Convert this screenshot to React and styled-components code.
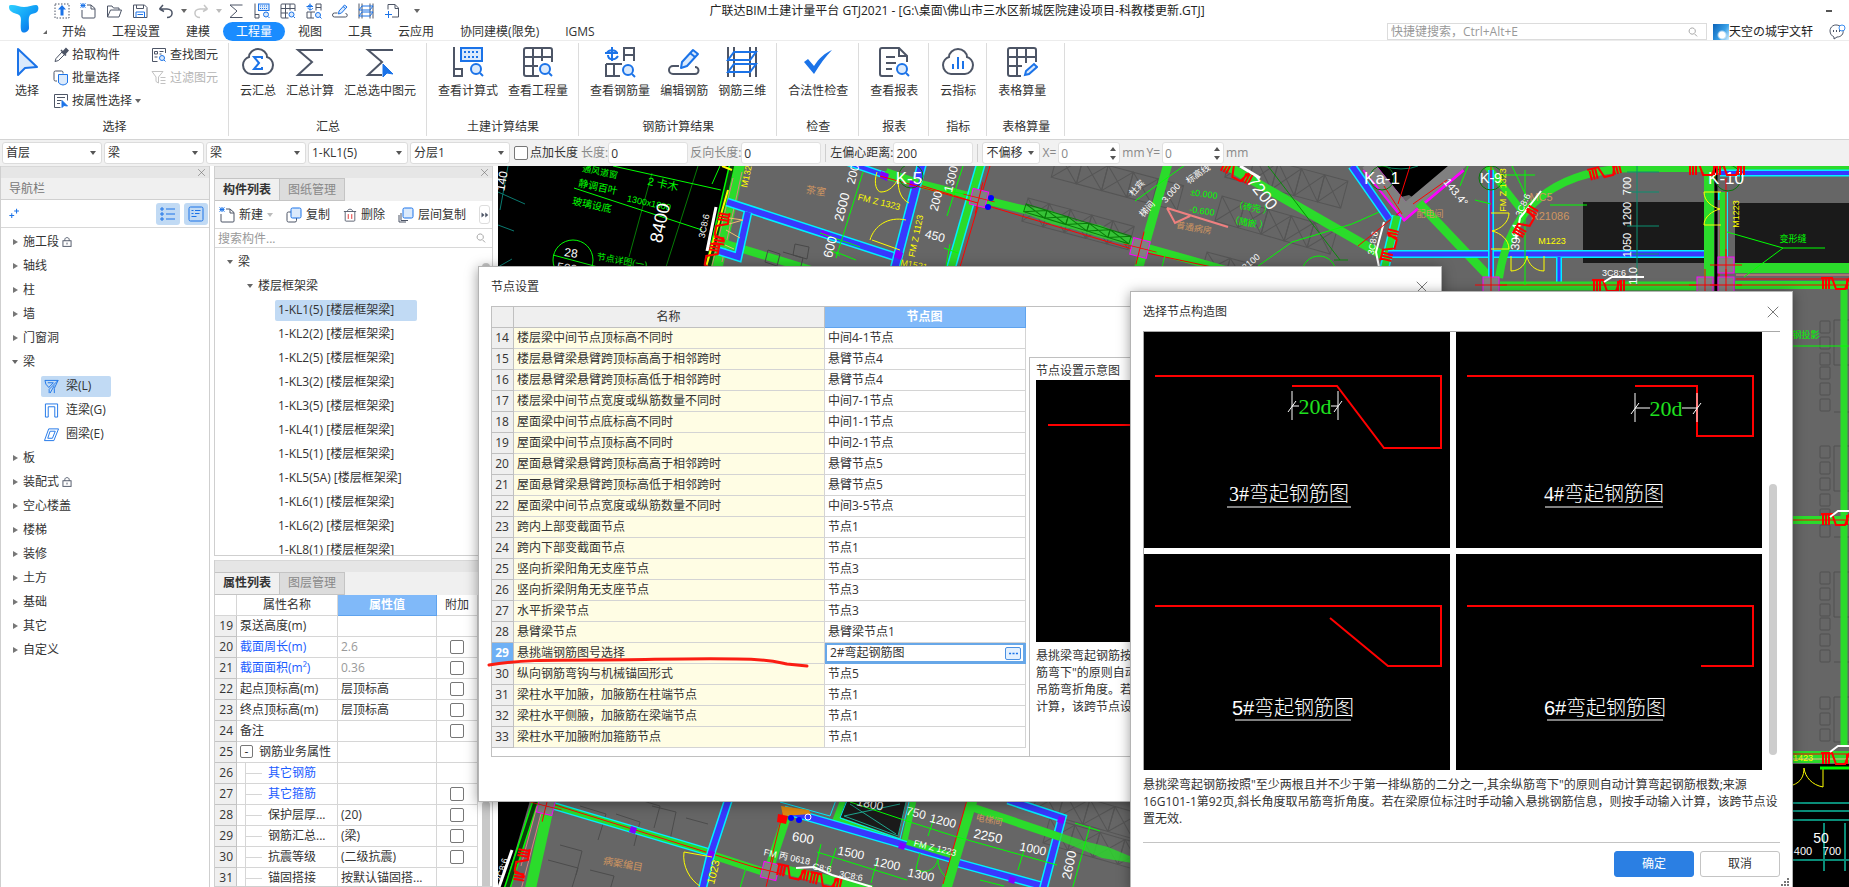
import React from "react";
import styled, { createGlobalStyle, css } from "styled-components";

const INK = "#4d5566";
const BLUE = "#1b73e8";
const PALE = "#dbeafc";

const GlobalStyle = createGlobalStyle`
  * { box-sizing: border-box; }
  body { margin: 0; background: #fff; }
  body, button, input, select, textarea, table {
    font-family: "Open Sans", "Noto Sans CJK SC", sans-serif;
    font-size: 12px;
    line-height: 18px;
    color: #333;
  }
  button { border: 0; background: none; padding: 0; margin: 0; white-space: nowrap; }
  svg { display: block; flex: none; }
`;

/* ---------- icons ---------- */

const Lens = ({ x, y, r = 5 }) => (
  <g stroke={BLUE} strokeWidth="2">
    <circle cx={x} cy={y} r={r} fill={PALE} />
    <path d={`M${x + r - 1} ${y + r - 1}l3 3`} />
  </g>
);
const Pencil = () => (
  <g stroke={BLUE} strokeWidth="2" fill={PALE} strokeLinejoin="round">
    <path d="M13 22l1-6L25 4l5 4-11 12z" />
    <path d="M22 7l5 4" />
  </g>
);

const shapes = {
  cursor: (
    <path d="M7 3v26l7-7 12-1z" fill={PALE} stroke={BLUE} strokeWidth="2" strokeLinejoin="round" />
  ),
  cloudSum: (
    <g strokeWidth="2">
      <path d="M16 3c5 0 9 4 9 8 3 1 6 4 6 8 0 5-4 9-8 9H9c-4 0-8-4-8-9 0-4 3-7 6-8 0-4 4-8 9-8z" />
      <path d="M20 13v-2h-8l5 6-5 6h8v-2" stroke={BLUE} />
    </g>
  ),
  sigma: <path d="M29 4H4l14 12L4 29h25" strokeWidth="2" />,
  sigmaCursor: (
    <g strokeWidth="2">
      <path d="M29 4H4l14 12L4 29h14" />
      <path d="M19 18v13l4-4 6 1z" fill={BLUE} stroke={BLUE} strokeWidth="1" />
    </g>
  ),
  formula: (
    <g strokeWidth="2">
      <path d="M2 1v29h8v-7H2" />
      <rect x="9" y="2" width="21" height="13" stroke={BLUE} fill={PALE} />
      <path d="M12 6h15M12 11h15" stroke={BLUE} strokeDasharray="2 2" />
      <Lens x={24} y={23} />
    </g>
  ),
  quantity: (
    <g strokeWidth="2">
      <path d="M17 30H4a2 2 0 0 1-2-2V4a2 2 0 0 1 2-2h24a2 2 0 0 1 2 2v12M2 11h28M2 20h14M11 2v28M20 2v13" />
      <Lens x={23} y={23} />
    </g>
  ),
  rebarQty: (
    <g strokeWidth="2">
      <path d="M20 15V2h10v13M20 9h10M2 18v12h14M2 18h16M10 18v12" />
      <path d="M8 1v14M3 8c0-5 10-5 10 0M1 7h13M4 9c0 5 7 6 10 1" stroke={BLUE} />
      <Lens x={24} y={24} />
    </g>
  ),
  editRebar: (
    <g strokeWidth="2">
      <path d="M11 20H5a4 4 0 0 0 0 8h22a3 3 0 0 0 0-7" />
      <Pencil />
    </g>
  ),
  rebar3d: (
    <g strokeWidth="2">
      <path d="M2 1v30M8 1v30M24 1v30M30 1v30" />
      <path d="M8 6h22l-6 8H2zM8 18h22l-6 8H2z" stroke={BLUE} />
    </g>
  ),
  check: <path d="M2 16l4-3 6 7C17 12 23 7 30 4 24 10 18 18 12 28z" fill={BLUE} stroke="none" />,
  report: (
    <g strokeWidth="2">
      <path d="M15 30H4a2 2 0 0 1-2-2V4a2 2 0 0 1 2-2h17l8 8v6M21 2v8h8M8 11h9M8 17h10M8 23h6" />
      <Lens x={24} y={23} />
    </g>
  ),
  cloudChart: (
    <g strokeWidth="2">
      <path d="M16 3c5 0 9 4 9 8 3 1 6 4 6 8 0 5-4 9-8 9H9c-4 0-8-4-8-9 0-4 3-7 6-8 0-4 4-8 9-8z" />
      <path d="M11 18v5M16 11v12M21 15v8" stroke={BLUE} />
    </g>
  ),
  tableCalc: (
    <g strokeWidth="2">
      <path d="M15 30H4a2 2 0 0 1-2-2V4a2 2 0 0 1 2-2h24a2 2 0 0 1 2 2v12M2 11h28M2 20h14M11 2v28M20 2v15" />
      <path d="M19 29l1-4 8-7 3 3-8 7z" stroke={BLUE} fill={PALE} />
    </g>
  ),
  upload: (
    <g strokeWidth="2">
      <rect x="2" y="2" width="28" height="28" strokeDasharray="3 3" />
      <path d="M16 4l8 9h-5v12h-6V13H8z" fill={BLUE} stroke="none" />
    </g>
  ),
  newFile: (
    <g strokeWidth="2">
      <path d="M4 14v14a2 2 0 0 0 2 2h22a2 2 0 0 0 2-2V11l-8-7h-8M22 4v8h8" />
      <path d="M1 1l10 8M11 1L1 9M1 5h10M6 0v10" stroke={BLUE} />
    </g>
  ),
  open: <path d="M3 28V6h9l3 4h11v4M3 28l6-14h22l-5 14z" strokeWidth="2" />,
  save: (
    <g strokeWidth="2">
      <path d="M3 4h22l5 5v20H3z" />
      <path d="M9 4v7h14V4" />
      <path d="M8 29V18h17v11M11 23h11" stroke={BLUE} />
    </g>
  ),
  undo: <path d="M3 12l7-8M3 12l9 5M3 12h15c14 0 13 17 0 17" strokeWidth="3" />,
  redo: <path d="M29 12l-7-8M29 12l-9 5M29 12H14c-14 0-13 17 0 17" strokeWidth="3" stroke="#c6c6c6" />,
  crop: (
    <g strokeWidth="2">
      <path d="M8 3h14l7 7v18H16M22 3v8h7M8 3v10" />
      <path d="M9 16v14M2 23h14" stroke={BLUE} />
    </g>
  ),
  dropper: (
    <g strokeWidth="2">
      <path d="M4 29l2-6L18 10l5 5-12 12z" />
      <path d="M16 6l10 11M19 11l7-8 4 4-7 8z" fill={INK} strokeWidth="3" />
    </g>
  ),
  batch: (
    <g strokeWidth="2">
      <path d="M8 22H5a3 3 0 0 1-3-3V5a3 3 0 0 1 3-3h12a3 3 0 0 1 3 3v2" />
      <path d="M11 9h18v15c0 3-4 5-9 6-5-1-9-3-9-6z" stroke={BLUE} fill={PALE} />
    </g>
  ),
  byProp: (
    <g strokeWidth="2">
      <path d="M15 29H3V3h26v12M8 9h16M8 15h9M8 21h6" />
      <path d="M18 15v14l4-4 7 1z" fill={BLUE} stroke={BLUE} />
    </g>
  ),
  find: (
    <g strokeWidth="2">
      <path d="M13 29H3V3h26v9M7 9h6v5H7zM17 9h8M17 14h4M7 20h6" />
      <Lens x={22} y={22} />
    </g>
  ),
  filter: (
    <path
      d="M2 3h22l-9 11v12l-5-3v-9zM19 15h10M19 21h10M19 27h10"
      strokeWidth="2"
      stroke="#c2c2c2"
    />
  ),
  copy: (
    <g strokeWidth="2">
      <path d="M10 10H5a3 3 0 0 0-3 3v14a3 3 0 0 0 3 3h13a3 3 0 0 0 3-3v-5" />
      <rect x="10" y="2" width="20" height="20" rx="3" stroke={BLUE} fill={PALE} />
    </g>
  ),
  trash: (
    <g strokeWidth="2">
      <path d="M2 8h28M5 8v20a2 2 0 0 0 2 2h18a2 2 0 0 0 2-2V8M10 8c0-7 12-7 12 0" />
      <path d="M12 14v11M20 14v11" stroke="#e02020" />
    </g>
  ),
  layers: (
    <g strokeWidth="2">
      <path d="M6 12v15h14M2 16v14h14" />
      <rect x="10" y="2" width="20" height="20" rx="3" stroke={BLUE} fill={PALE} />
    </g>
  ),
  list: (
    <g strokeWidth="2" stroke={BLUE}>
      <path d="M12 6h18M12 16h18M12 26h18" />
      <path d="M2 4h4v4H2zM2 14h4v4H2zM2 24h4v4H2z" />
    </g>
  ),
  card: (
    <g strokeWidth="2" stroke={BLUE}>
      <rect x="2" y="2" width="28" height="28" rx="3" />
      <path d="M7 9h4M14 9h11M7 15h4M14 15h9M7 21h10" />
    </g>
  ),
  plus: <path d="M22 2v14M15 9h14M8 15v14M1 22h14" strokeWidth="3" stroke={BLUE} />,
  lock: (
    <g strokeWidth="3">
      <rect x="3" y="12" width="26" height="18" />
      <path d="M9 12V8c0-8 14-8 14 0v4M16 18v6" />
    </g>
  ),
  beam: <path d="M2 3h28L11 22v8M2 3l2 8 7 8M30 3L22 20v10M8 8h12l-9 9M22 14l-9 16" strokeWidth="2" stroke={BLUE} />,
  linkBeam: <path d="M3 30V2h26v28h-6V8H9v22z" strokeWidth="2" stroke={BLUE} />,
  ringBeam: <path d="M10 4h21L21 29H1zM13 9h11l-6 15H8z" strokeWidth="2" stroke={BLUE} />,
  search: <path d="M13 3a10 10 0 1 0 1 0zM21 22l8 8" strokeWidth="3" stroke="#a0a0a0" />,
  close: <path d="M4 4l24 24M28 4L4 28" strokeWidth="2" stroke="#666" />,
  more: <path d="M2 6l12 10L2 26zM17 6l12 10-12 10z" fill={INK} stroke="none" />,
  dots: <path d="M3 16h6M13 16h6M23 16h6" strokeWidth="5" stroke={BLUE} />,
};

const Icon = ({ name, size = 16 }) => (
  <svg width={size} height={size} viewBox="0 0 32 32" fill="none" stroke={INK} aria-hidden="true">
    {shapes[name]}
  </svg>
);

const Caret = styled.span`
  flex: none;
  width: 0;
  height: 0;
  border: 3px solid transparent;
  ${(p) =>
    p.$right
      ? css`border-left: 5px solid #777; border-right: 0;`
      : css`border-top: 4px solid ${p.$muted ? "#bbb" : "#666"}; border-bottom: 0;`}
`;

/* ---------- window header ---------- */

const Shell = styled.div`
  position: relative;
  display: flex;
  flex-direction: column;
  height: 100vh;
  overflow: hidden;
`;
const Header = styled.header`
  flex: none;
  display: grid;
  grid-template-columns: 49px 1fr;
  height: 41px;
  border-bottom: 1px solid #ececec;
`;
const LogoButton = styled.button`
  display: flex;
  align-items: flex-end;
  padding: 0 0 7px 9px;
`;
const HeaderRows = styled.div`
  display: grid;
  grid-template-rows: 22px 19px;
`;
const TitleRow = styled.div`
  display: grid;
  grid-template-columns: 1fr auto 1fr;
  align-items: center;
`;
const QuickBar = styled.div`
  display: flex;
  align-items: center;
`;
const QuickButton = styled.button`
  display: flex;
  justify-content: center;
  width: 26px;
`;
const CaretSlot = styled.button`
  display: flex;
  justify-content: center;
  width: ${(p) => (p.$wide ? 24 : 9)}px;
`;
const Title = styled.h1`
  margin: 0;
  padding-left: 16px;
  font-size: 12px;
  font-weight: 400;
  color: #222;
`;
const Minimize = styled.button`
  justify-self: end;
  width: 6px;
  height: 2px;
  margin-right: 17px;
  background: #555;
`;
const TabRow = styled.div`
  display: flex;
  align-items: center;
`;
const Menu = styled.nav`
  display: flex;
  flex: 1;
`;
const MenuTab = styled.button`
  height: 19px;
  padding: 0 13px;
  border-radius: 10px;
  line-height: 19px;
  color: ${(p) => (p.$on ? "#fff" : "#333")};
  background: ${(p) => (p.$on ? "#1a8cff" : "transparent")};
`;
const ShortcutSearch = styled.label`
  display: flex;
  align-items: center;
  width: 320px;
  height: 17px;
  padding-right: 8px;
  border: 1px solid #dcdcdc;
`;
const PlainInput = styled.input`
  flex: 1;
  min-width: 0;
  padding: 0 3px;
  border: 0;
  outline: 0;
  background: none;
  line-height: 15px;
  &::placeholder { color: #999; opacity: 1; }
`;
const User = styled.button`
  display: flex;
  align-items: center;
  margin-left: 6px;
  color: #222;
`;
const Avatar = styled.span`
  width: 16px;
  height: 16px;
  background: radial-gradient(circle at 9px 11px, #fff 0 3px, transparent 5px),
    linear-gradient(120deg, #0a62b8, #39a1e8 60%, #d8effc);
`;
const Message = styled.button`
  margin: 0 3px 0 16px;
`;

const Logo = () => (
  <svg width="40" height="29" viewBox="0 0 40 29" aria-hidden="true">
    <defs>
      <linearGradient id="logoFill" x1="0" y1="0" x2="1" y2="1">
        <stop offset="0" stopColor="#2fd0ff" />
        <stop offset="0.5" stopColor="#12a0f6" />
        <stop offset="1" stopColor="#0a62e6" />
      </linearGradient>
    </defs>
    <path
      d="M0 2c0-2 1-2 3-2 4 0 8 2 12 2S24 0 27 0c3 0 3 5 1 7-2 2-5 1-7 3-2 3-1 8-1 13 0 4-7 7-8 2-1-6 1-11-1-14C9 8 5 9 3 7 1 6 0 4 0 2z"
      fill="url(#logoFill)"
    />
    <path d="M34 29l4-4v4z" fill="#666" />
  </svg>
);

const quickIcons = ["upload", "newFile", "open", "save", "undo", "redo", "sigma", "formula", "quantity", "rebarQty", "editRebar", "rebar3d", "crop"];
const menuTabs = ["开始", "工程设置", "建模", "工程量", "视图", "工具", "云应用", "协同建模(限免)", "IGMS"];

const WindowHeader = () => (
  <Header>
    <LogoButton aria-label="应用菜单"><Logo /></LogoButton>
    <HeaderRows>
      <TitleRow>
        <QuickBar>
          {quickIcons.map((n) => (
            <React.Fragment key={n}>
              <QuickButton aria-label={n}><Icon name={n} /></QuickButton>
              {(n === "undo" || n === "redo") && (
                <CaretSlot aria-label={n + " history"}><Caret $muted={n === "redo"} /></CaretSlot>
              )}
            </React.Fragment>
          ))}
          <CaretSlot $wide aria-label="自定义"><Caret /></CaretSlot>
        </QuickBar>
        <Title>广联达BIM土建计量平台 GTJ2021 - [G:\桌面\佛山市三水区新城医院建设项目-科教楼更新.GTJ]</Title>
        <Minimize aria-label="最小化" />
      </TitleRow>
      <TabRow>
        <Menu>
          {menuTabs.map((t) => <MenuTab key={t} $on={t === "工程量"}>{t}</MenuTab>)}
        </Menu>
        <ShortcutSearch>
          <PlainInput placeholder="快捷键搜索，Ctrl+Alt+E" aria-label="快捷键搜索" />
          <Icon name="search" size={10} />
        </ShortcutSearch>
        <User><Avatar />天空の城宇文轩</User>
        <Message aria-label="消息">
          <svg width="17" height="16" viewBox="0 0 17 16" fill="none" stroke={INK}>
            <path d="M11 2C5-1 1 3 1 7c0 3 2 5 4 6v2l3-2c4 0 7-3 6-7" />
            <path d="M4 7h1M7 7h1M10 7h1" strokeWidth="2" />
            <circle cx="13" cy="4" r="3" stroke="#3d8ef0" />
          </svg>
        </Message>
      </TabRow>
    </HeaderRows>
  </Header>
);

/* ---------- ribbon ---------- */

const Ribbon = styled.div`
  flex: none;
  display: flex;
  height: 98px;
  padding: 2px 0 3px;
`;
const Group = styled.section`
  display: flex;
  flex-direction: column;
  justify-content: space-between;
  min-width: 78px;
  padding: 0 10px 0 11px;
  border-right: 1px solid #dcdcdc;
  &:nth-child(n + 6):not(:last-child) { min-width: 0; }
`;
const GroupTools = styled.div`
  display: flex;
  gap: 10px;
`;
const GroupName = styled.span`
  text-align: center;
`;
const BigButton = styled.button`
  display: flex;
  flex-direction: column;
  align-items: center;
  gap: 4px;
  padding-top: 3px;
`;
const SmallColumn = styled.div`
  display: grid;
  gap: 5px;
  align-content: start;
  padding-top: 3px;
`;
const SmallButton = styled.button`
  display: flex;
  align-items: center;
  gap: 3px;
  color: ${(p) => (p.$off ? "#b5b5b5" : "#333")};
`;

const ribbonGroups = [
  ["汇总", [["cloudSum", "云汇总"], ["sigma", "汇总计算"], ["sigmaCursor", "汇总选中图元"]]],
  ["土建计算结果", [["formula", "查看计算式"], ["quantity", "查看工程量"]]],
  ["钢筋计算结果", [["rebarQty", "查看钢筋量"], ["editRebar", "编辑钢筋"], ["rebar3d", "钢筋三维"]]],
  ["检查", [["check", "合法性检查"]]],
  ["报表", [["report", "查看报表"]]],
  ["指标", [["cloudChart", "云指标"]]],
  ["表格算量", [["tableCalc", "表格算量"]]],
];

const RibbonBar = () => (
  <Ribbon>
    <Group>
      <GroupTools>
        <BigButton><Icon name="cursor" size={32} />选择</BigButton>
        <SmallColumn>
          <SmallButton><Icon name="dropper" />拾取构件</SmallButton>
          <SmallButton><Icon name="batch" />批量选择</SmallButton>
          <SmallButton><Icon name="byProp" />按属性选择<Caret /></SmallButton>
        </SmallColumn>
        <SmallColumn>
          <SmallButton><Icon name="find" />查找图元</SmallButton>
          <SmallButton $off disabled><Icon name="filter" />过滤图元</SmallButton>
        </SmallColumn>
      </GroupTools>
      <GroupName>选择</GroupName>
    </Group>
    {ribbonGroups.map(([name, tools]) => (
      <Group key={name}>
        <GroupTools>
          {tools.map(([icon, label]) => (
            <BigButton key={label}><Icon name={icon} size={32} />{label}</BigButton>
          ))}
        </GroupTools>
        <GroupName>{name}</GroupName>
      </Group>
    ))}
  </Ribbon>
);

/* ---------- option bar ---------- */

const OptionBar = styled.div`
  flex: none;
  display: flex;
  align-items: center;
  gap: 2px;
  height: 27px;
  padding-left: 2px;
  border-top: 1px solid #d4d4d4;
  background: #f1f1f1;
  white-space: nowrap;
`;
const ComboFrame = styled.span`
  position: relative;
  display: flex;
  width: ${(p) => p.$w}px;
  height: 22px;
  &::after {
    content: "";
    position: absolute;
    right: 6px;
    top: 9px;
    border: 3px solid transparent;
    border-top: 4px solid #555;
    border-bottom: 0;
    pointer-events: none;
  }
`;
const ComboSelect = styled.select`
  appearance: none;
  width: 100%;
  padding: 0 3px;
  border: 1px solid #dcdcdc;
  border-radius: 3px;
  background: #fff;
`;
const Check = styled.input.attrs({ type: "checkbox" })`
  appearance: none;
  flex: none;
  width: 14px;
  height: 14px;
  margin: 0;
  border: 1px solid #777;
  border-radius: 2px;
  background: #fff;
`;
const CheckLabel = styled.label`
  display: flex;
  align-items: center;
  gap: 2px;
  padding: 0 1px 0 2px;
`;
const Field = styled.label`
  display: flex;
  align-items: center;
  gap: ${(p) => p.$gap || 0}px;
  color: ${(p) => (p.$dim ? "#888" : "#333")};
`;
const FieldInput = styled.input`
  width: ${(p) => p.$w}px;
  height: 22px;
  padding: 0 2px;
  border: 1px solid #e0e0e0;
  border-radius: 3px;
  background: #fff;
  color: inherit;
  ${(p) => !p.$keep && css`color: #333;`}
`;
const Spin = styled.span`
  position: relative;
  display: flex;
  &::before, &::after {
    content: "";
    position: absolute;
    right: 4px;
    border: 3px solid transparent;
  }
  &::before { top: 5px; border-bottom: 4px solid #555; border-top: 0; }
  &::after { bottom: 4px; border-top: 4px solid #555; border-bottom: 0; }
`;
const BarRule = styled.i`
  width: 1px;
  height: 18px;
  margin: 0 2px;
  background: #cfcfcf;
`;

const Combo = ({ value, label, w = 101 }) => (
  <ComboFrame $w={w}>
    <ComboSelect aria-label={label} defaultValue={value}><option>{value}</option></ComboSelect>
  </ComboFrame>
);
const SpinField = ({ name }) => (
  <Field $dim $gap={2}>
    {name}=
    <Spin><FieldInput $w={62} $keep defaultValue="0" /></Spin>
    mm
  </Field>
);

const Options = () => (
  <OptionBar>
    <Combo label="楼层" value="首层" w={100} />
    <Combo label="构件类别" value="梁" w={100} />
    <Combo label="构件类型" value="梁" w={100} />
    <Combo label="构件" value="1-KL1(5)" w={100} />
    <Combo label="分层" value="分层1" w={100} />
    <CheckLabel><Check />点加长度</CheckLabel>
    <Field $dim>长度:<FieldInput $w={80} defaultValue="0" /></Field>
    <Field $dim>反向长度:<FieldInput $w={80} defaultValue="0" /></Field>
    <BarRule />
    <Field>左偏心距离:<FieldInput $w={80} defaultValue="200" /></Field>
    <BarRule />
    <Combo label="偏移方式" value="不偏移" w={58} />
    <SpinField name="X" />
    <SpinField name="Y" />
  </OptionBar>
);

/* ---------- side panels ---------- */

const Work = styled.main`
  flex: 1;
  min-height: 0;
  display: flex;
`;
const NavPanel = styled.aside`
  flex: none;
  width: 210px;
  border: 1px solid #cfcfcf;
  border-width: 0 1px;
`;
const Strip = styled.div`
  display: flex;
  flex: none;
  align-items: center;
  justify-content: flex-end;
  height: 12px;
  padding-right: 3px;
  background: #e6e6e6;
  border-top: 1px solid #d8d8d8;
`;
const PanelTitle = styled.h2`
  margin: 0;
  height: 22px;
  padding-left: 8px;
  font-size: 12px;
  font-weight: 400;
  line-height: 22px;
  color: #777;
  background: #f0f0f0;
  border-bottom: 1px solid #d0d0d0;
`;
const NavTools = styled.div`
  display: flex;
  align-items: center;
  gap: 4px;
  height: 28px;
  padding: 0 1px 0 8px;
  border-bottom: 1px solid #d8d8d8;
`;
const AddButton = styled.button`
  margin-right: auto;
`;
const ToggleButton = styled.button`
  display: flex;
  align-items: center;
  justify-content: center;
  width: 24px;
  height: 22px;
  border-radius: 3px;
  background: #c1daf4;
`;
const Tree = styled.ul`
  flex: 1;
  min-height: 0;
  overflow: hidden;
  margin: 0;
  padding: 2px 0 0;
  list-style: none;
`;
const TreeRow = styled.li`
  display: flex;
  align-items: center;
  height: 24px;
  padding-left: ${(p) => p.$pad}px;
`;
const FoldSlot = styled.button`
  display: flex;
  justify-content: center;
  width: 10px;
`;
const TreeItem = styled.button`
  display: flex;
  align-items: center;
  gap: 7px;
  height: 21px;
  min-width: ${(p) => p.$w || 0}px;
  padding: 0 3px;
  border-radius: 2px;
  text-align: left;
  background: ${(p) => (p.$on ? "#c1daf4" : "transparent")};
`;

const navItems = [
  { t: "施工段", lock: true }, { t: "轴线" }, { t: "柱" }, { t: "墙" }, { t: "门窗洞" }, { t: "梁", open: true },
  { t: "梁(L)", icon: "beam", on: true }, { t: "连梁(G)", icon: "linkBeam" }, { t: "圈梁(E)", icon: "ringBeam" },
  { t: "板" }, { t: "装配式", lock: true }, { t: "空心楼盖" }, { t: "楼梯" }, { t: "装修" }, { t: "土方" },
  { t: "基础" }, { t: "其它" }, { t: "自定义" },
];

const Navigator = () => (
  <NavPanel>
    <Strip><button aria-label="关闭导航栏"><Icon name="close" size={9} /></button></Strip>
    <PanelTitle>导航栏</PanelTitle>
    <NavTools>
      <AddButton aria-label="添加"><Icon name="plus" size={11} /></AddButton>
      <ToggleButton aria-label="列表"><Icon name="list" /></ToggleButton>
      <ToggleButton aria-label="卡片"><Icon name="card" /></ToggleButton>
    </NavTools>
    <Tree>
      {navItems.map((n) =>
        n.icon ? (
          <TreeRow key={n.t} $pad={40}>
            <TreeItem $on={n.on} $w={70}><Icon name={n.icon} size={15} />{n.t}</TreeItem>
          </TreeRow>
        ) : (
          <TreeRow key={n.t} $pad={9}>
            <FoldSlot aria-label={`展开${n.t}`}><Caret $right={!n.open} /></FoldSlot>
            <TreeItem>{n.t}</TreeItem>
            {n.lock && <Icon name="lock" size={10} />}
          </TreeRow>
        )
      )}
    </Tree>
  </NavPanel>
);

const SideColumn = styled.div`
  flex: none;
  display: flex;
  flex-direction: column;
  gap: 4px;
  width: 279px;
  margin: 0 5px 0 4px;
`;
const SidePanel = styled.section`
  display: flex;
  flex-direction: column;
  flex: ${(p) => p.$share} 1 0;
  min-height: 0;
  border: 1px solid #cfcfcf;
  border-top: 0;
`;
const SideTabs = styled.div`
  display: flex;
  flex: none;
  height: 23px;
  background: #f0f0f0;
`;
const SideTab = styled.button`
  width: 65px;
  border: 1px solid #c4c4c4;
  border-width: 1px 1px 1px 0;
  font-weight: ${(p) => (p.$on ? 700 : 400)};
  color: ${(p) => (p.$on ? "#333" : "#888")};
  background: ${(p) => (p.$on ? "#f0f0f0" : "#dcdcdc")};
`;
const ListTools = styled.div`
  display: flex;
  flex: none;
  align-items: center;
  justify-content: space-between;
  height: 27px;
  padding: 0 2px 0 4px;
`;
const ToolButton = styled.button`
  display: flex;
  align-items: center;
  gap: 4px;
`;
const MoreButton = styled.button`
  display: flex;
  align-items: center;
  justify-content: center;
  width: 11px;
  height: 19px;
  border: 1px solid #ddd;
  border-radius: 3px;
`;
const ListSearch = styled.label`
  display: flex;
  flex: none;
  align-items: center;
  height: 20px;
  padding-right: 6px;
  border: 1px solid #d8d8d8;
  border-width: 1px 0;
`;
const ScrollRow = styled.div`
  display: flex;
  flex: 1;
  min-height: 0;
  overflow: hidden;
`;
const Thumb = styled.i`
  flex: none;
  width: 8px;
  margin: ${(p) => p.$top}px 2px 0 auto;
  border-radius: 4px 4px 0 0;
  background: #c8c8c8;
`;

const members = ["1-KL1(5)", "1-KL2(2)", "1-KL2(5)", "1-KL3(2)", "1-KL3(5)", "1-KL4(1)", "1-KL5(1)", "1-KL5(5A)", "1-KL6(1)", "1-KL6(2)", "1-KL8(1)"];

const MemberList = () => (
  <SidePanel $share={390}>
    <Strip><button aria-label="关闭构件列表"><Icon name="close" size={9} /></button></Strip>
    <SideTabs><SideTab $on>构件列表</SideTab><SideTab>图纸管理</SideTab></SideTabs>
    <ListTools>
      <ToolButton><Icon name="newFile" />新建<Caret $muted /></ToolButton>
      <ToolButton><Icon name="copy" />复制</ToolButton>
      <ToolButton><Icon name="trash" size={14} />删除</ToolButton>
      <ToolButton><Icon name="layers" />层间复制</ToolButton>
      <MoreButton aria-label="更多"><Icon name="more" size={8} /></MoreButton>
    </ListTools>
    <ListSearch>
      <PlainInput placeholder="搜索构件..." aria-label="搜索构件" />
      <Icon name="search" size={10} />
    </ListSearch>
    <ScrollRow>
      <Tree>
        <TreeRow $pad={10}><FoldSlot aria-label="折叠梁"><Caret /></FoldSlot><TreeItem>梁</TreeItem></TreeRow>
        <TreeRow $pad={30}><FoldSlot aria-label="折叠楼层框架梁"><Caret /></FoldSlot><TreeItem>楼层框架梁</TreeItem></TreeRow>
        {members.map((m, i) => (
          <TreeRow key={m} $pad={60}>
            <TreeItem $on={i === 0} $w={142}>{m} [楼层框架梁]</TreeItem>
          </TreeRow>
        ))}
      </Tree>
      <Thumb $top={15} />
    </ScrollRow>
  </SidePanel>
);

const PropTable = styled.table`
  flex: none;
  align-self: flex-start;
  width: 263px;
  table-layout: fixed;
  border-spacing: 0;
  th, td {
    height: 21px;
    padding: 0 3px;
    border: 1px solid #d6d6d6;
    border-width: 0 1px 1px 0;
    font-weight: 400;
    line-height: 18px;
    text-align: left;
    white-space: nowrap;
  }
  thead th { text-align: center; }
  tbody th { background: #efefef; text-align: right; border-color: #c4c4c4; }
  td:last-child { text-align: center; }
`;
const HotHead = styled.th`
  && { background: #80b9f9; color: #fff; font-weight: 700; border-color: #5fa3ee; }
`;
const PropName = styled.span`
  display: flex;
  align-items: center;
  gap: 6px;
  color: ${(p) => (p.$link ? "#1a5cff" : "#333")};
`;
const Branch = styled.i`
  flex: none;
  width: 17px;
  height: 20px;
  margin-left: 5px;
  border-left: 1px solid #d6d6d6;
  background: linear-gradient(#d6d6d6, #d6d6d6) 0 10px / 17px 1px no-repeat;
`;
const Fold = styled.button`
  width: 13px;
  height: 13px;
  border: 1px solid #777;
  border-radius: 2px;
  line-height: 10px;
`;
const GreyValue = styled.span`
  color: #999;
`;
const BoxCheck = styled(Check)`
  display: block;
  margin: 0 auto;
`;

const props = [
  { n: 19, t: "泵送高度(m)" },
  { n: 20, t: "截面周长(m)", v: "2.6", link: true, grey: true, c: true },
  { n: 21, t: "截面面积(m²)", v: "0.36", link: true, grey: true, c: true },
  { n: 22, t: "起点顶标高(m)", v: "层顶标高", c: true },
  { n: 23, t: "终点顶标高(m)", v: "层顶标高", c: true },
  { n: 24, t: "备注", c: true },
  { n: 25, t: "钢筋业务属性", fold: true },
  { n: 26, t: "其它钢筋", link: true, sub: true },
  { n: 27, t: "其它箍筋", link: true, sub: true, c: true },
  { n: 28, t: "保护层厚...", v: "(20)", sub: true, c: true },
  { n: 29, t: "钢筋汇总...", v: "(梁)", sub: true, c: true },
  { n: 30, t: "抗震等级", v: "(二级抗震)", sub: true, c: true },
  { n: 31, t: "锚固搭接", v: "按默认锚固搭...", sub: true },
];

const PropertyList = () => (
  <SidePanel $share={327}>
    <Strip />
    <SideTabs><SideTab $on>属性列表</SideTab><SideTab>图层管理</SideTab></SideTabs>
    <ScrollRow>
      <PropTable>
        <colgroup><col width="22" /><col width="101" /><col width="99" /><col width="41" /></colgroup>
        <thead><tr><th /><th>属性名称</th><HotHead>属性值</HotHead><th>附加</th></tr></thead>
        <tbody>
          {props.map((p) => (
            <tr key={p.n}>
              <th scope="row">{p.n}</th>
              <td>
                <PropName $link={p.link}>
                  {p.fold && <Fold aria-label="折叠">-</Fold>}
                  {p.sub && <Branch />}
                  {p.t}
                </PropName>
              </td>
              <td>{p.grey ? <GreyValue>{p.v}</GreyValue> : p.v}</td>
              <td>{p.c && <BoxCheck aria-label={p.t} />}</td>
            </tr>
          ))}
        </tbody>
      </PropTable>
      <Thumb $top={206} />
    </ScrollRow>
  </SidePanel>
);

/* ---------- CAD drawing ---------- */

const Canvas = styled.div`
  flex: 1;
  min-width: 0;
  overflow: hidden;
  background: #666;
`;
const DrawingSvg = styled.svg`
  width: 100%;
  height: 100%;
  font-family: "Liberation Sans Narrow", "Liberation Sans", "Noto Sans CJK SC", sans-serif;
`;

const G = "#2bdb2b";
const Wall = ({ d, w = 6, c = "#3838ff", e = "#00f0ff" }) => (
  <g fill="none">
    <path d={d} stroke={e} strokeWidth={w + 3} />
    <path d={d} stroke={c} strokeWidth={w} />
  </g>
);
const Beam = ({ d, w = 8 }) => <path d={d} stroke={G} strokeWidth={w} fill="none" />;
const Line = ({ d, c = "#0f0", w = 1 }) => <path d={d} stroke={c} strokeWidth={w} fill="none" />;
const Txt = ({ x, y, r = 0, s = 14, c = "#fff", children }) => (
  <text
    transform={`translate(${x} ${y}) rotate(${r})`}
    fontSize={s}
    fill={c}
    textAnchor="middle"
    dominantBaseline="central"
  >
    {children}
  </text>
);
const Post = ({ x, y, s = 16, r = 0 }) => (
  <g transform={`translate(${x} ${y}) rotate(${r})`}>
    <rect x={-s / 2} y={-s / 2} width={s} height={s} fill="#808080" stroke="#ff00ff" />
    <path d={`M${-s} 0H${s}M0 ${-s}V${s}`} stroke="#f00" />
  </g>
);
const Tie = ({ x, y, r = 0 }) => (
  <g transform={`translate(${x} ${y}) rotate(${r})`} fill="none" stroke="#f00" strokeWidth="2">
    <path d="M-16 -5h12M-14 -5V6M-11 -5V6M-8 -5V6M-5 -5l4 11H8l4-11M10 6V-4M13 6V-5M16 6V-5" />
  </g>
);
const Truss = ({ x, y, r, n = 5, w = 22, h = 20, c = "#555" }) => (
  <g transform={`translate(${x} ${y}) rotate(${r})`} stroke={c} fill="none">
    {Array.from({ length: n }, (_, i) => (
      <path key={i} d={`M${i * w} 0h${w}v${h}h${-w}zl${w} ${h}m0 ${-h}l${-w} ${h}`} />
    ))}
  </g>
);

const topRight = (
  <g>
    <path d="M1583 202h121v61h-121zM1735 203h130v60h-130z" fill="#1a1a1a" />
    <path d="M1366 166h91l-40 34-8-5-8 2z" fill="#000" />
    <Line d="M1384 166a22 8 0 0 0 34 0" c="#0a8060" />
    <Wall d="M1352 166L1389 219" w={6} />
    <path d="M1368 166L1405 212 1460 166" stroke="#f0f" strokeWidth="14" fill="none" />
    <path d="M1367 164L1405 210 1462 162" stroke="#808080" strokeWidth="12" fill="none" />
    <Line d="M1384 186l18 28M1410 166l-12 38M1413 204l34-24M1400 212l-42 34" c="#f00" />
    <Wall d="M1397 216L1384 270" w={7} c={G} />
    <Beam d="M1419 203L1494 282" w={9} />
    <Beam d="M1487 166L1526 216" w={7} />
    <Wall d="M1388 254H1714" w={5} />
    <Wall d="M1491 170V280" w={3} />
    <Wall d="M1559 257V290" w={3} />
    <Beam d="M1499 278C1506 228 1535 168 1640 168H1849" w={8} />
    <Wall d="M1720 173H1860" w={4} />
    <Beam d="M1709 166V277" w={10} />
    <Line d="M1716 166V292" c="#000" w={3} />
    <Wall d="M1723 192V258" w={7} c={G} />
    <Beam d="M1500 286H1697" w={9} />
    <Beam d="M1735 268H1860" w={10} />
    <Beam d="M1735 285H1860" w={8} />
    <Line d="M1491 166V290M1498 285H1697M1736 279H1849M1719 200V292M1726 178v110M1736 285H1849" c="#f00" />
    <Line d="M1736 275H1849" c="#f08080" />
    <Post x={1491} y={285} />
    <Post x={1705} y={285} />
    <Post x={1726} y={265} />
    <Post x={1726} y={285} />
    <Line d="M1637 166V285M1627 172h32M1627 192h32M1627 226h32M1627 254h32" c="#0a9070" />
    <Line d="M1525 170V285M1460 186l8-20M1500 175h35M1512 166l16 34M1550 205h37M1475 200l16 4M1727 232l56 16h42M1783 248L1744 277" />
    <Line d="M1491 213h18c0 9-8 16-17 18 9 2 17 9 17 18h-18" c="#ff0" />
    <Line d="M1511 256v15c9 0 15-7 16-15 1 8 8 15 17 15v-15" c="#ff0" />
    <Line d="M1721 192h-17c0 9 8 15 16 17-8 2-16 8-16 16h17" c="#ff0" />
    <circle cx="1491" cy="178" r="12" fill="none" stroke="#087808" />
    <circle cx="1382" cy="178" r="12" fill="none" stroke="#087808" />
    <circle cx="1728" cy="178" r="13" fill="none" stroke="#087808" />
    <Txt x={1382} y={178} s={17}>Ka-1</Txt>
    <Txt x={1491} y={178} s={14}>K-9</Txt>
    <Txt x={1726} y={178} s={17}>K-10</Txt>
    <Txt x={1456} y={192} r={52} s={11}>143.4°</Txt>
    <Txt x={1503} y={190} r={-90} s={9} c="#ff0">FM Z 1323</Txt>
    <Txt x={1552} y={241} s={9} c="#ff0">M1223</Txt>
    <Txt x={1736} y={214} r={-90} s={9} c="#ff0">M1223</Txt>
    <Txt x={1541} y={197} s={11} c="#cf9561">MC5</Txt>
    <Txt x={1550} y={216} s={11} c="#cf9561">R21086</Txt>
    <Txt x={1430} y={214} s={9} c="#cf9561">配电间</Txt>
    <Txt x={1516} y={237} r={-86} s={12}>3964</Txt>
    <Txt x={1523} y={205} r={-65} s={9}>3C8:6</Txt>
    <Line d="M1541 191l-21 27-4 20" c="#fff" w={2} />
    <Tie x={1525} y={222} r={-60} />
    <Tie x={1604} y={171} r={-14} />
    <Tie x={1608} y={285} />
    <Tie x={1704} y={169} />
    <Tie x={1728} y={169} />
    <Tie x={1837} y={283} />
    <Tie x={1389} y={246} r={-76} />
    <Line d="M1604 282l8-5h32" c="#fff" w={2} />
    <Txt x={1614} y={273} s={9}>3C8:6</Txt>
    <Txt x={1627} y={186} r={-90} s={11}>700</Txt>
    <Txt x={1627} y={214} r={-90} s={11}>1200</Txt>
    <Txt x={1627} y={245} r={-90} s={11}>1050</Txt>
    <Txt x={1633} y={276} r={-90} s={11}>110</Txt>
    <Txt x={1793} y={239} s={9} c="#0f0">变形缝</Txt>
  </g>
);

const topMiddle = (
  <g>
    <Truss x={1058} y={152} r={15} n={5} w={26} h={26} />
    <Truss x={1232} y={150} r={15} n={5} w={24} h={28} />
    <Truss x={1222} y={196} r={16} n={5} w={24} h={26} />
    <Truss x={1207} y={252} r={15} n={4} w={24} h={22} />
    <Truss x={1028} y={198} r={15} n={5} w={22} h={24} />
    <Beam d="M884 175L1026 210" />
    <path d="M1026 206l26 5 24 10 24 4 34 14-2 7-30-8-26-8-24-6-26-10z" fill={G} opacity="0.8" />
    <Truss x={1026} y={204} r={17} n={5} w={22} h={8} c="#0a7a0a" />
    <Beam d="M1148 248L1240 274" />
    <Wall d="M982 160L949 275" w={7} c={G} />
    <Line d="M990 166l-30 101M1164 166l-27 101" c="#f00" />
    <Beam d="M1169 160L1138 270" w={9} />
    <Line d="M884 174L978 203 1142 252 1226 270" c="#f00" />
    <Beam d="M1224 164L1384 256" w={9} />
    <Line d="M1268 166L1340 260M1334 260h14" c="#0a8a0a" />
    <Line d="M1135 201l50-36M1258 266l34-24 60-18 34-15M1165 255l-3 12M963 166l-16 50M944 190l20 4M950 244l-4 22M944 248l14 5" />
    <circle cx="1319" cy="273" r="17" fill="none" stroke="#0f0" />
    <Line d="M1167 208l8 15 15-7M1167 208l61 19" c="#f08080" w={2} />
    <Post x={979} y={198} s={16} r={14} />
    <Post x={1140} y={248} s={17} r={14} />
    <circle cx="991" cy="198" r="3" fill="#00f" />
    <circle cx="988" cy="207" r="3" fill="#00f" />
    <Line d="M1240 166l20 12" c="#fff" w={3} />
    <Tie x={1236} y={172} r={28} />
    <Line d="M1384 222l-8 30 3 15" c="#fff" w={2} />
    <Txt x={1373} y={243} r={-80} s={9}>3C8:6</Txt>
    <Txt x={1262} y={193} r={52} s={17}>7200</Txt>
    <Txt x={1204} y={194} r={8} s={9} c="#0f0">±0.000</Txt>
    <Txt x={1202} y={211} r={8} s={9} c="#0f0">-0.600</Txt>
    <Txt x={1253} y={208} r={10} s={9} c="#0f0">（砖完 ）</Txt>
    <Txt x={1249} y={223} r={10} s={9} c="#0f0">（随嵌 ）</Txt>
    <Txt x={1194} y={228} r={10} s={9} c="#cf9561">普通病房</Txt>
    <Txt x={1171} y={193} r={-48} s={9}>3.000</Txt>
    <Txt x={1137} y={188} r={-48} s={9}>杜宾</Txt>
    <Txt x={1147} y={209} r={-48} s={9}>梯间</Txt>
    <Txt x={1198} y={174} r={-35} s={9}>标高线</Txt>
    <Txt x={1251} y={262} r={-40} s={9}>2100</Txt>
  </g>
);

const topLeft = (
  <g>
    <path d="M498 166h234l-24 101h-210z" fill="#000" />
    <Line d="M498 192l27 12M508 166l-8 44M498 225l16 6M498 267l14-8" c="#0a7a70" />
    <Line d="M652 173L629 257M698 166L666 267" c="#067a06" />
    <Line d="M574 188L702 230M613 166L721 190M553 255l90 24M720 166l-8 18" />
    <circle cx="573" cy="260" r="20" fill="none" stroke="#0f0" />
    <Wall d="M733 162L707 275" w={4} c="#0c3c0c" e="#0f0" />
    <Line d="M728 190L706 267M722 166l10 4" c="#ff0" w={2} />
    <Beam d="M741 160L716 275" w={10} />
    <Line d="M733 178l-22 92M742 172l-20 90" c="#e08080" />
    <Beam d="M723 243L818 272" />
    <Wall d="M727 202L902 259" w={6} />
    <Wall d="M748 212L738 257 719 251" w={6} />
    <Wall d="M840 160L884 175" w={4} />
    <Wall d="M923 160L893 275" w={7} />
    <Beam d="M886 172L918 183" w={8} />
    <path d="M881 171l8 3-2 7-7-3zM910 180l8 3-2 7-7-3zM822 230l8 3-2 5-8-3zM896 250l7 3-2 7-7-3z" fill="#8000ff" />
    <Line d="M880 176L978 203" c="#f00" />
    <Line d="M863 172L836 258M836 252l20 8M831 250l9 6M820 233l40 14" />
    <Line d="M877 172c-4 12 0 20 4 20 8 0 14-7 17-13 0 12 3 20 11 24M872 240l28 10M870 240c4-14 18-24 36-20" c="#ff0" />
    <circle cx="911" cy="176" r="12" fill="none" stroke="#087808" />
    <Tie x={722} y={228} r={100} />
    <Tie x={712} y={258} r={100} />
    <Line d="M716 207l-9 44" c="#fff" w={3} />
    <Line d="M729 218l14 2-14 4M726 230l14 8M725 245l9 4" c="#f0c070" />
    <Line d="M768 250l12 4-3 12-12-4zM783 252l20 6-3 12M795 244l14 3-2 12-14-4z" c="#484848" />
    <Txt x={502} y={181} r={-80} s={12}>140</Txt>
    <Txt x={600} y={172} r={12} s={9} c="#0f0">通风道窗</Txt>
    <Txt x={598} y={187} r={12} s={10} c="#0f0">静调百叶</Txt>
    <Txt x={592} y={205} r={12} s={10} c="#0f0">玻璃设底</Txt>
    <Txt x={663} y={184} r={12} s={11} c="#0f0">2 卡木</Txt>
    <Txt x={649} y={203} r={12} s={9} c="#0f0">1300x1800</Txt>
    <Txt x={622} y={261} r={10} s={9} c="#0f0">节点详图(一)</Txt>
    <Txt x={660} y={223} r={-78} s={18}>8400</Txt>
    <Txt x={571} y={253} r={8} s={12}>28</Txt>
    <Txt x={567} y={268} r={8} s={12}>500</Txt>
    <Txt x={704} y={226} r={-78} s={9}>3C8:6</Txt>
    <Txt x={747} y={174} r={-78} s={9} c="#ff0">M1323</Txt>
    <Txt x={816} y={191} r={8} s={10} c="#cf9561">茶室</Txt>
    <Txt x={842} y={207} r={-76} s={13}>2600</Txt>
    <Txt x={830} y={247} r={-76} s={13}>600</Txt>
    <Txt x={853} y={174} r={-76} s={12}>200</Txt>
    <Txt x={936} y={201} r={-76} s={12}>200</Txt>
    <Txt x={951} y={179} r={-76} s={12}>1300</Txt>
    <Txt x={935} y={236} r={14} s={12}>450</Txt>
    <Txt x={879} y={202} r={14} s={9} c="#ff0">FM Z 1323</Txt>
    <Txt x={916} y={236} r={-78} s={9} c="#ff0">FM Z 1123</Txt>
    <Txt x={914} y={265} r={10} s={9} c="#ff0">M1521</Txt>
    <Txt x={909} y={178} s={17}>K-5</Txt>
  </g>
);

const bottom = (
  <g>
    <path d="M498 780h38l-38 130z" fill="#000" />
    <Truss x={1050} y={818} r={16} n={4} w={26} h={26} />
    <Truss x={1040} y={785} r={16} n={4} w={26} h={26} />
    <Line d="M560 845l22 6-6 24M548 860l30 8-8 26M590 870l24 6-4 14M640 800l20 6-6 22M580 806l26 8-8 26M616 814l24 8-6 24M652 806l24 6-6 28M686 818l22 6" c="#4c4c4c" />
    <Wall d="M536 800L505 895" w={4} c="#0c3c0c" e="#0f0" />
    <Beam d="M549 805L529 895" w={11} />
    <Line d="M543 806l-22 84M537 806l-16 60" c="#e08080" />
    <Line d="M512 850l-14 40" c="#fff" w={3} />
    <Tie x={522} y={864} r={100} />
    <Txt x={502} y={870} r={-75} s={9}>3C8:6</Txt>
    <Wall d="M554 806L712 853" w={5} c={G} />
    <Beam d="M712 855L770 874" />
    <Line d="M552 804L770 872" c="#f00" />
    <Wall d="M729 798L711 853 701 895" w={6} />
    <Post x={546} y={806} r={14} />
    <path d="M631 826l6 2-2 6-6-2zM709 850l6 2-2 6-6-2z" fill="#8000ff" />
    <Line d="M712 857l-28-5c-2 14 6 28 16 34" c="#ff0" />
    <Txt x={713} y={872} r={-76} s={11} c="#ff0">1023</Txt>
    <Txt x={623} y={864} r={10} s={10} c="#cf9561">病案编目</Txt>
    <Line d="M746 868l-6 20" />
    <path d="M847 798h60l-9 39-58-20z" fill="#1a1a1a" />
    <Line d="M850 804l46 30M900 804l-56 12M844 816l54 20 8-34" c="#1fa890" />
    <Beam d="M844 798L836 819 904 843 914 798" w={6} />
    <Line d="M848 798l-8 20 60 21 10-41M780 802l50 14 6-16" c="#00f0ff" />
    <Beam d="M788 812L770 866" w={9} />
    <Line d="M783 812l-14 56" c="#f00" />
    <Wall d="M784 810L957 860" w={6} />
    <Beam d="M907 842L957 857" w={6} />
    <path d="M781 806l28 4 2 4-28 2z" fill="#e08a10" />
    <path d="M778 814l10 2-2 8-9-2z" fill="#f00" />
    <circle cx="791" cy="818" r="3" fill="#00f" />
    <circle cx="799" cy="820" r="3" fill="#00f" />
    <circle cx="808" cy="817" r="3" fill="none" stroke="#fff" />
    <Wall d="M958 863L1042 886" w={6} />
    <Wall d="M1008 800L1062 818 1043 890" w={6} />
    <Beam d="M974 808L1060 837" />
    <path d="M1060 833l24 8 24 6 24 10v6l-30-5-24-10-20-8z" fill={G} opacity="0.8" />
    <Beam d="M973 798L946 890" w={10} />
    <Line d="M967 800l-24 84" c="#f00" />
    <path d="M1059 816l6 2-2 6-6-2zM1010 876l6 2-2 6-6-2zM900 842l6 2-2 6-6-2z" fill="#8000ff" />
    <Line d="M817 852l90 28M821 844l-6 26M836 848l-8 26M877 861l-6 22M850 802l57 19 50 16 100 28M934 818l-6 18M1024 850l-6 20M1075 823l25 8M1090 826l-18 64M980 880l24 6M920 853l-4 16c10 6 20 0 22-10 0 10 4 14 8 18" />
    <Post x={770} y={871} r={14} />
    <Line d="M786 870L872 890" c={G} w={9} />
    <Tie x={792} y={872} r={12} />
    <Tie x={825} y={880} r={12} />
    <Line d="M796 868l18-1 18 8 40 12" c="#fff" w={2} />
    <Txt x={803} y={838} r={10} s={13}>600</Txt>
    <Txt x={851} y={853} r={12} s={12}>1500</Txt>
    <Txt x={887} y={864} r={12} s={12}>1200</Txt>
    <Txt x={921} y={875} r={12} s={12}>1300</Txt>
    <Txt x={870} y={804} r={12} s={12}>1800</Txt>
    <Txt x={916} y={813} r={14} s={12}>750</Txt>
    <Txt x={943} y={821} r={14} s={12}>1200</Txt>
    <Txt x={988} y={836} r={12} s={13}>2250</Txt>
    <Txt x={1033} y={849} r={12} s={12}>1000</Txt>
    <Txt x={1069} y={865} r={-78} s={13}>2600</Txt>
    <Txt x={935} y={848} r={14} s={9}>FM Z 1223</Txt>
    <Txt x={787} y={857} r={12} s={9}>FM 丙 0618</Txt>
    <Txt x={822} y={868} r={10} s={9}>C8:6</Txt>
    <Txt x={851} y={876} r={10} s={9}>3C8:6</Txt>
    <Txt x={989} y={820} r={12} s={9} c="#cf9561">电梯间</Txt>
  </g>
);

const right = (
  <g>
    {[321, 337, 353, 367, 383, 399, 446, 462, 478, 494, 509, 525, 572, 588, 604, 618, 634, 650, 697, 713, 729].map((y) => (
      <rect key={y} x="1820" y={y} width="10" height="12" rx="1" fill="none" stroke="#505050" />
    ))}
    <Line d="M1849 320h-15v45h15M1849 412h-15M1849 446h-15v45h15M1849 537h-15M1849 572h-15v45h15M1849 662h-15M1849 697h-15v45h15" c="#505050" />
    <Beam d="M1844 290V745" w={7} />
    <Beam d="M1790 520H1849" w={8} />
    <path d="M1790 764h70v130h-70z" fill="#000" />
    <Beam d="M1790 757H1860" w={12} />
    <Line d="M1793 520h56M1793 754h56" c="#f00" />
    <Line d="M1793 759h56" c="#f0b090" />
    <Line d="M1793 346h56" />
    <Tie x={1837} y={519} />
    <Tie x={1837} y={758} />
    <Line d="M1830 517l8-6h12M1830 752l8-6h12" c="#fff" w={2} />
    <Txt x={1806} y={335} s={9} c="#0f0">钢投影</Txt>
    <Txt x={1803} y={758} s={9} c="#ff0">1423</Txt>
    <Line d="M1793 785c8-3 11-9 11-17 1 9 8 17 19 19v-20" c="#ff0" />
    <Line d="M1793 803h56M1793 811h56M1793 820h56M1793 860h56M1824 823v48M1845 823v48" c="#0a8c78" w={2} />
    <Txt x={1821} y={838} s={14}>50</Txt>
    <Txt x={1803} y={851} s={11}>400</Txt>
    <Txt x={1832} y={851} s={11}>700</Txt>
    <Line d="M1820 768h29" w={3} />
  </g>
);

const Drawing = () => (
  <Canvas>
    <DrawingSvg aria-label="平面图">
      <g transform="translate(-498 -166)">
        {topMiddle}
        {topLeft}
        {topRight}
        {right}
        {bottom}
      </g>
    </DrawingSvg>
  </Canvas>
);

/* ---------- dialogs ---------- */

const Dialog = styled.section`
  position: absolute;
  left: ${(p) => p.$x}px;
  top: ${(p) => p.$y}px;
  width: ${(p) => p.$w}px;
  padding: 0 12px;
  border: 1px solid #b4b4b4;
  background: #fff;
  box-shadow: 0 2px 12px rgba(0, 0, 0, 0.4);
`;
const DialogHead = styled.div`
  display: flex;
  align-items: center;
  justify-content: space-between;
  height: 39px;
`;
const DialogTitle = styled.h2`
  margin: 0;
  font-size: 12px;
  font-weight: 400;
`;
const NodeBox = styled.div`
  display: flex;
  align-items: stretch;
  height: 451px;
  margin-right: 3px;
  border: 1px solid #c0c0c0;
`;
const NodeTable = styled.table`
  flex: none;
  align-self: flex-start;
  width: 534px;
  margin-right: 3px;
  table-layout: fixed;
  border-spacing: 0;
  th, td {
    height: 21px;
    padding: 0 4px 0 3px;
    border: 1px solid #d4d4d4;
    border-width: 0 1px 1px 0;
    font-weight: 400;
    line-height: 18px;
    text-align: left;
    white-space: nowrap;
  }
  thead th { height: 21px; text-align: center; background: #efefef; border-color: #c0c0c0; }
  tbody th { text-align: center; background: #efefef; border-color: #c0c0c0; }
  td:nth-child(2) { background: #fffde4; }
`;
const NumberCell = styled.th`
  ${(p) => p.$on && css`&&& { background: #6fb0f5; color: #fff; font-weight: 700; }`}
`;
const EditCell = styled.td`
  ${(p) =>
    p.$on &&
    css`&&&& { padding: 0 4px 0 5px; background: #fff; box-shadow: inset 0 0 0 2px #67a7e8; border-color: #67a7e8; }`}
`;
const CellEditor = styled.span`
  display: flex;
  align-items: center;
  justify-content: space-between;
`;
const DotsButton = styled.button`
  display: flex;
  align-items: center;
  justify-content: center;
  width: 16px;
  height: 13px;
  border: 1px solid #4a90e2;
  border-radius: 2px;
  background: #e2f0ff;
`;
const Preview = styled.div`
  flex: 1;
  min-width: 0;
  margin-top: 50px;
  padding: 4px 0 0 6px;
  border: 1px solid #c0c0c0;
  border-width: 1px 0 0 1px;
`;
const PreviewImage = styled.svg`
  width: 100%;
  height: 262px;
  background: #000;
`;
const Note = styled.p`
  margin: ${(p) => p.$top}px 0 0;
  line-height: 17px;
`;
const RedMark = styled.svg`
  position: absolute;
  left: 8px;
  top: 388px;
  pointer-events: none;
`;
const DialogFoot = styled.div`
  height: 44px;
`;

const nodes = [
  ["楼层梁中间节点顶标高不同时", "中间4-1节点"],
  ["楼层悬臂梁悬臂跨顶标高高于相邻跨时", "悬臂节点4"],
  ["楼层悬臂梁悬臂跨顶标高低于相邻跨时", "悬臂节点4"],
  ["楼层梁中间节点宽度或纵筋数量不同时", "中间7-1节点"],
  ["屋面梁中间节点底标高不同时", "中间1-1节点"],
  ["屋面梁中间节点顶标高不同时", "中间2-1节点"],
  ["屋面悬臂梁悬臂跨顶标高高于相邻跨时", "悬臂节点5"],
  ["屋面悬臂梁悬臂跨顶标高低于相邻跨时", "悬臂节点5"],
  ["屋面梁中间节点宽度或纵筋数量不同时", "中间3-5节点"],
  ["跨内上部变截面节点", "节点1"],
  ["跨内下部变截面节点", "节点1"],
  ["竖向折梁阳角无支座节点", "节点3"],
  ["竖向折梁阴角无支座节点", "节点3"],
  ["水平折梁节点", "节点3"],
  ["悬臂梁节点", "悬臂梁节点1"],
  ["悬挑端钢筋图号选择", "2#弯起钢筋图"],
  ["纵向钢筋弯钩与机械锚固形式", "节点5"],
  ["梁柱水平加腋，加腋筋在柱端节点", "节点1"],
  ["梁柱水平侧腋，加腋筋在梁端节点", "节点1"],
  ["梁柱水平加腋附加箍筋节点", "节点1"],
];

const NodeDialog = () => (
  <Dialog role="dialog" aria-label="节点设置" $x={478} $y={266} $w={964}>
    <DialogHead>
      <DialogTitle>节点设置</DialogTitle>
      <button aria-label="关闭"><Icon name="close" size={14} /></button>
    </DialogHead>
    <NodeBox>
      <NodeTable>
        <colgroup><col width="22" /><col width="311" /><col width="201" /></colgroup>
        <thead><tr><th /><th>名称</th><HotHead>节点图</HotHead></tr></thead>
        <tbody>
          {nodes.map(([name, value], i) => {
            const on = i === 15;
            return (
              <tr key={name}>
                <NumberCell scope="row" $on={on}>{i + 14}</NumberCell>
                <td>{name}</td>
                <EditCell $on={on}>
                  {on ? (
                    <CellEditor>
                      {value}
                      <DotsButton aria-label="选择节点图"><Icon name="dots" size={11} /></DotsButton>
                    </CellEditor>
                  ) : value}
                </EditCell>
              </tr>
            );
          })}
        </tbody>
      </NodeTable>
      <Preview>
        节点设置示意图
        <PreviewImage><path d="M12 45H330V110" stroke="#f00" strokeWidth="2" fill="none" /></PreviewImage>
        <Note $top={5}>
          悬挑梁弯起钢筋按照"至少两根且并不少于第一排纵筋的二分之一,其余纵<br />
          筋弯下"的原则自动计算弯起钢筋根数;来源16G101-1第92页,斜长角度取<br />
          吊筋弯折角度。若在梁原位标注时手动输入悬挑钢筋信息，则按手动输入<br />
          计算，该跨节点设置无效.
        </Note>
      </Preview>
    </NodeBox>
    <DialogFoot />
    <RedMark width="324" height="16" aria-hidden="true">
      <path
        d="M2 10C30 5 60 5 110 5s90-2 140-1c30 0 40 3 50 5l20 2"
        fill="none"
        stroke="#fb1d12"
        strokeWidth="3"
        strokeLinecap="round"
      />
    </RedMark>
  </Dialog>
);

const TileBox = styled.div`
  display: flex;
  justify-content: space-between;
  border: 1px solid #a8a8a8;
  border-width: 1px 0 0 1px;
`;
const TileGrid = styled.div`
  flex: 1;
  display: grid;
  grid-template-columns: 1fr 1fr;
  gap: 6px;
`;
const Tile = styled.button`
  height: 216px;
  background: #000;
`;
const TileSvg = styled.svg`
  width: 100%;
  height: 216px;
  font-family: ${(p) => (p.$serif ? '"Liberation Serif"' : '"Liberation Sans"')}, "Noto Sans CJK SC", sans-serif;
  font-weight: 300;
`;
const TileThumb = styled.i`
  width: 8px;
  height: 271px;
  margin: 152px 3px 0 7px;
  border-radius: 4px;
  background: #cdcdcd;
`;
const Actions = styled.div`
  display: flex;
  justify-content: flex-end;
  gap: 6px;
  margin-top: 15px;
  padding: 8px 0 12px;
  border-top: 1px solid #c4c4c4;
`;
const ActionButton = styled.button`
  width: 80px;
  height: 26px;
  border: 1px solid ${(p) => (p.$primary ? "#2b7fe3" : "#c4c4c4")};
  border-radius: 3px;
  color: ${(p) => (p.$primary ? "#fff" : "#333")};
  background: ${(p) => (p.$primary ? "#2b7fe3" : "#fff")};
`;
const Grip = styled.svg`
  position: absolute;
  right: 2px;
  bottom: 2px;
`;

const Dim = ({ a, b, y }) => (
  <g>
    <path
      d={`M${a} ${y - 15}v29M${b} ${y - 15}v29M${a - 4} ${y + 6}l8-11M${b - 4} ${y + 6}l8-11M${a} ${y}h${(b - a) / 2 - 16}M${b} ${y}h${16 - (b - a) / 2}`}
      stroke="#fff"
      fill="none"
    />
    <text x={(a + b) / 2} y={y} fontSize="22" fill="#1fe01f" textAnchor="middle" dominantBaseline="central">20d</text>
  </g>
);

const tiles = [
  { n: 3, d: "M11 44H297V116H240L193 54H148", dim: [148, 194, 74], x: 145, y: 162, u: 175, from: 83 },
  { n: 4, d: "M11 44H297V104H241V54H179", dim: [179, 241, 76], x: 148, y: 162, u: 175, from: 89 },
  { n: 5, d: "M11 52H297V112H244L186 64", x: 149, y: 154, u: 166, from: 91 },
  { n: 6, d: "M11 52H297V112H245", x: 149, y: 154, u: 166, from: 91 },
];

const PickDialog = () => (
  <Dialog role="dialog" aria-label="选择节点构造图" $x={1130} $y={291} $w={663}>
    <DialogHead>
      <DialogTitle>选择节点构造图</DialogTitle>
      <button aria-label="关闭"><Icon name="close" size={14} /></button>
    </DialogHead>
    <TileBox>
      <TileGrid>
        {tiles.map((t) => (
          <Tile key={t.n} aria-label={`${t.n}#`}>
            <TileSvg $serif={!!t.dim}>
              <path d={t.d} stroke="#f00" strokeWidth="2" fill="none" />
              {t.dim && <Dim a={t.dim[0]} b={t.dim[1]} y={t.dim[2]} />}
              <text x={t.x} y={t.y} fontSize="20" fill="#fff" textAnchor="middle" dominantBaseline="central">
                {t.n}#弯起钢筋图
              </text>
              <path d={`M${t.from} ${t.u}H207`} stroke="#fff" />
            </TileSvg>
          </Tile>
        ))}
      </TileGrid>
      <TileThumb />
    </TileBox>
    <Note $top={6}>
      悬挑梁弯起钢筋按照"至少两根且并不少于第一排纵筋的二分之一,其余纵筋弯下"的原则自动计算弯起钢筋根数;来源<br />
      16G101-1第92页,斜长角度取吊筋弯折角度。若在梁原位标注时手动输入悬挑钢筋信息，则按手动输入计算，该跨节点设置无效.
    </Note>
    <Actions>
      <ActionButton $primary>确定</ActionButton>
      <ActionButton>取消</ActionButton>
    </Actions>
    <Grip width="9" height="9" aria-hidden="true">
      <path d="M6 1h2M3 4h2M6 4h2M0 7h2M3 7h2M6 7h2" stroke="#777" strokeWidth="2" />
    </Grip>
  </Dialog>
);

export default function App() {
  return (
    <Shell>
      <GlobalStyle />
      <WindowHeader />
      <RibbonBar />
      <Options />
      <Work>
        <Navigator />
        <SideColumn>
          <MemberList />
          <PropertyList />
        </SideColumn>
        <Drawing />
      </Work>
      <NodeDialog />
      <PickDialog />
    </Shell>
  );
}
